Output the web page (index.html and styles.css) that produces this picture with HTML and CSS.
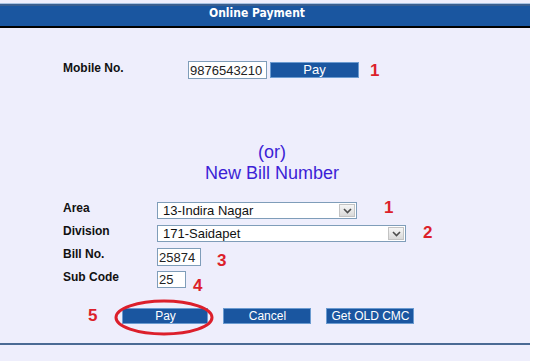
FILE: index.html
```html
<!DOCTYPE html>
<html lang="en">
<head>
  <meta charset="UTF-8" />
  <title>Online Payment</title>
  <link rel="stylesheet" href="styles.css">
</head>
<body>
  <div class="panel">
    <div class="title">Online Payment</div>

    <div class="mobile-row">
      <span class="lbl mobile-lbl">Mobile No.</span>
      <input class="txt mobile-input" type="text" value="9876543210" />
      <button class="btn pay-top">Pay</button>
      <span class="step step-m">1</span>
    </div>

    <div class="or-block">
      <div>(or)</div>
      <div>New Bill Number</div>
    </div>

    <div class="bill-form">
      <div class="row">
        <span class="lbl">Area</span>
        <span class="select area-sel">
          <span class="sel-text">13-Indira Nagar</span>
          <span class="arrow"><svg width="9" height="6" viewBox="0 0 9 6"><path d="M1 1 L4.5 4.5 L8 1" fill="none" stroke="#4d4d4d" stroke-width="1.6"/></svg></span>
        </span>
        <span class="step step-a">1</span>
      </div>
      <div class="row">
        <span class="lbl">Division</span>
        <span class="select div-sel">
          <span class="sel-text">171-Saidapet</span>
          <span class="arrow"><svg width="9" height="6" viewBox="0 0 9 6"><path d="M1 1 L4.5 4.5 L8 1" fill="none" stroke="#4d4d4d" stroke-width="1.6"/></svg></span>
        </span>
        <span class="step step-d">2</span>
      </div>
      <div class="row">
        <span class="lbl">Bill No.</span>
        <input class="txt bill-input" type="text" value="25874" />
        <span class="step step-b">3</span>
      </div>
      <div class="row">
        <span class="lbl sub-lbl">Sub Code</span>
        <input class="txt sub-input" type="text" value="25" />
        <span class="step step-s">4</span>
      </div>
    </div>

    <div class="actions">
      <span class="step step-p">5</span>
      <span class="ring-wrap">
        <button class="btn">Pay</button>
        <svg class="ring" width="100" height="37" viewBox="0 0 100 37"><ellipse cx="50" cy="18.5" rx="48" ry="16.5" fill="none" stroke="#dc1f2b" stroke-width="3"/></svg>
      </span>
      <button class="btn">Cancel</button>
      <button class="btn">Get OLD CMC</button>
    </div>

    <div class="rule"></div>
  </div>
</body>
</html>
```

FILE: styles.css
```css
body { margin: 0; background: #fff; font-family: "Liberation Sans", Arial, sans-serif; color: #111; }
.panel { width: 530px; height: 361px; background: #eeeefc; padding-top: 3px; box-sizing: border-box; }
.title { height: 20px; line-height: 20px; background: #1a56a0; border-top: 1px solid #a9c3e3;
  box-shadow: inset 0 2px 0 #3b5f8f; border-bottom: 2px solid #000; color: #fff;
  font: bold 12px "DejaVu Sans Condensed", "DejaVu Sans", Verdana, sans-serif; text-align: center;
  padding-right: 16px; padding-top: 2px; margin-bottom: 1px; }

.lbl { font-size: 12px; font-weight: bold; color: #111; }
.txt { box-sizing: border-box; height: 18px; border: 1px solid #7f9db9; background: #fff; padding: 0 1px;
  font: 13px "Liberation Sans", Arial, sans-serif; color: #222; outline: none; }
.btn { box-sizing: border-box; height: 16px; width: 88px; padding: 0; background: #1a56a0; border: 1px solid #6b9bd0;
  color: #fff; font: 12px "Liberation Sans", Arial, sans-serif; line-height: 14px; cursor: pointer; }
.step { color: #dc1f2b; font-weight: bold; font-size: 17px; line-height: 17px; }

.mobile-row { display: flex; align-items: flex-start; padding: 32px 0 0 63px; }
.mobile-lbl { width: 125px; }
.mobile-input { width: 79px; }
.pay-top { width: 89px; margin: 1px 0 0 3px; font-size: 13px; }
.step-m { margin: 1px 0 0 11px; }

.or-block { margin-top: 63px; padding-left: 14px; text-align: center; color: #3c1fd6; font-size: 18px; line-height: 21px; }

.bill-form { display: flex; flex-direction: column; gap: 5px; padding: 18px 0 0 63px; }
.row { display: flex; align-items: flex-start; height: 18px; }
.row .lbl { width: 94px; margin-top: -1px; }
.select { box-sizing: border-box; display: flex; align-items: stretch; height: 17px; border: 1px solid #7f9db9; background: #fff; }
.sel-text { flex: 1; padding-left: 5px; font-size: 13px; line-height: 15px; color: #111; }
.arrow { width: 16px; margin: 1px; display: flex; align-items: center; justify-content: center; box-sizing: border-box;
  border: 1px solid #c3c3c3; background: linear-gradient(#f6f6f6, #d9d9d9); }
.area-sel { width: 200px; }
.div-sel { width: 249px; }
.step-a { margin: -3px 0 0 27px; }
.step-d { margin: -1px 0 0 17px; }
.bill-input { width: 44px; }
.step-b { margin: 4px 0 0 16px; }
.sub-input { width: 29px; height: 17px; }
.sub-lbl { margin-top: 0; }
.step-s { margin: 6px 0 0 7px; }

.actions { display: flex; align-items: center; gap: 15px; padding: 18px 0 0 88px; }
.step-p { margin-right: 10px; }
.ring-wrap { position: relative; display: flex; }
.ring-wrap .btn { width: 86px; }
.ring { position: absolute; left: -8px; top: -9px; }

.rule { margin-top: 19px; height: 2px; background: #4a6a94; }
```
